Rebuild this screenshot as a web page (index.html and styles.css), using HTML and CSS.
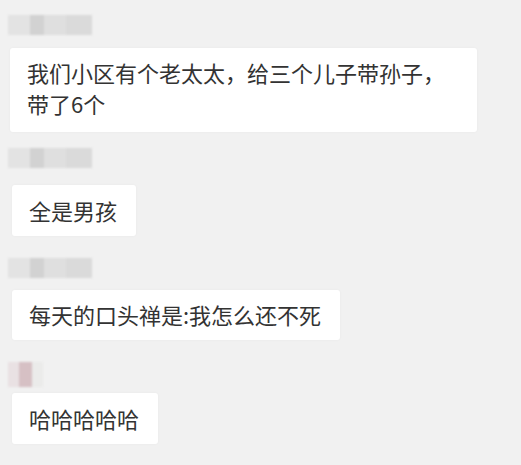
FILE: index.html
```html
<!DOCTYPE html>
<html lang="zh-CN">
<head>
    <meta charset="UTF-8">
    <meta name="viewport" content="width=device-width, initial-scale=1.0">
    <title>聊天记录</title>
    <link rel="stylesheet" href="styles.css">
</head>
<body>
    <div class="chat">
        <div class="msg msg-1">
            <div class="name name-gray"></div>
            <div class="bubble bubble-wide">我们小区有个老太太，给三个儿子带孙子，<br>带了6个</div>
        </div>

        <div class="msg msg-2">
            <div class="name name-gray"></div>
            <div class="bubble">全是男孩</div>
        </div>

        <div class="msg msg-3">
            <div class="name name-gray"></div>
            <div class="bubble">每天的口头禅是:我怎么还不死</div>
        </div>

        <div class="msg msg-4">
            <div class="name name-pink"></div>
            <div class="bubble">哈哈哈哈哈</div>
        </div>
    </div>
</body>
</html>
```

FILE: styles.css
```css
body {
    margin: 0;
    background-color: #f1f1f1;
    font-family: "Noto Sans CJK SC", "Noto Sans", sans-serif;
    color: #333333;
}
.chat {
    display: flex;
    flex-direction: column;
    padding: 15px 0 0 8px;
}
.msg {
    display: flex;
    flex-direction: column;
    align-items: flex-start;
    margin-bottom: 22px;
}
.msg-1 {
    margin-bottom: 16px;
}
.msg-1 .name {
    margin-bottom: 13px;
}
.msg-3 .name {
    margin-bottom: 12px;
}
/* blurred nickname */
.name {
    width: 84px;
    height: 20px;
    margin-bottom: 17px;
    filter: blur(1px);
}
.name-gray {
    background: linear-gradient(90deg,
        #e3e3e3 0, #e3e3e3 22px,
        #d2d2d2 22px, #d2d2d2 36px,
        #dfdfdf 36px, #dfdfdf 58px,
        #dadada 58px, #dadada 84px);
}
.msg-4 .name-pink {
    width: 35px;
    height: 25px;
    margin-bottom: 6px;
    background: linear-gradient(90deg,
        #e9e1e3 0, #e9e1e3 11px,
        #d6c0c4 11px, #d6c0c4 24px,
        #ebebea 24px);
}
.bubble {
    margin-left: 4px;
    padding: 13px 19px 13px 17px;
    background-color: #ffffff;
    border-radius: 3px;
    box-shadow: 0 0 3px rgba(0, 0, 0, 0.04);
    font-size: 22px;
    line-height: 25px;
}
.msg-3 .bubble {
    padding-top: 12px;
    padding-bottom: 13px;
}
.bubble-wide {
    width: 431px;
    margin-left: 2px;
    padding-top: 9px;
    padding-bottom: 13px;
    line-height: 31px;
}
```
